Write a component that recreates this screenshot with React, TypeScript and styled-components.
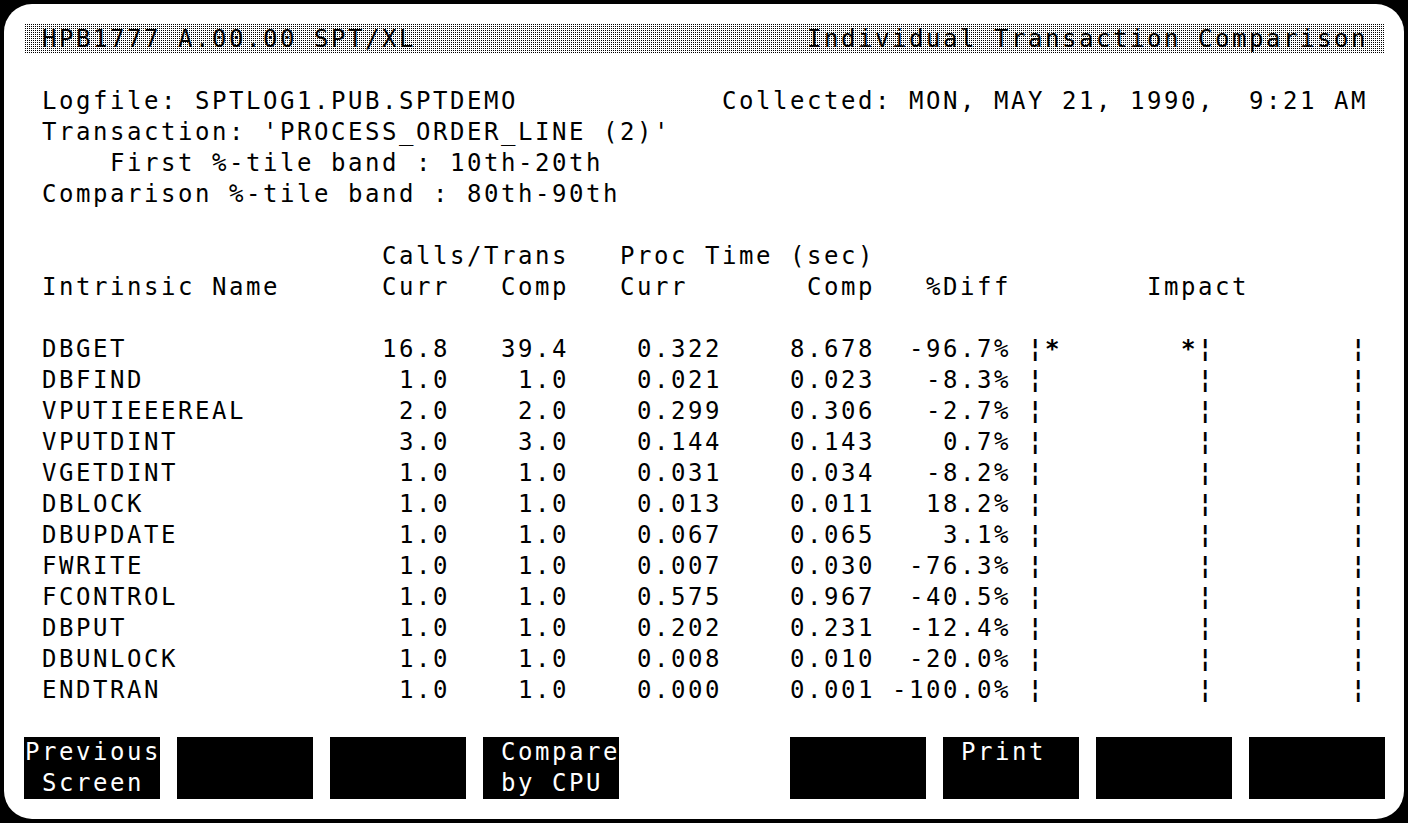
import React from "react";
import styled, { createGlobalStyle } from "styled-components";

const CELL = 17;
const LINE = 31;
const c = (n: number) => `${n * CELL}px`;

const GlobalStyle = createGlobalStyle`
  html, body { margin: 0; padding: 0; background: #000; }
  body { width: 1408px; height: 823px; overflow: hidden; }
`;

const Frame = styled.div`
  box-sizing: border-box;
  margin: 4px;
  width: 1400px;
  height: 815px;
  background: #fff;
  border-radius: 28px;
  padding: 20px 19px 20px 21px;
  font-family: "DejaVu Sans Mono", "Liberation Mono", monospace;
  font-size: 24px;
  line-height: ${LINE}px;
  letter-spacing: calc(${CELL}px - 1ch);
  color: #000;
  white-space: pre;
`;

const TitleBar = styled.div`
  height: 30px;
  margin-left: -1px;
  margin-bottom: 1px;
  padding: 0 ${CELL}px 0 ${CELL + 1}px;
  display: flex;
  justify-content: space-between;
  background-image: repeating-conic-gradient(#000 0 25%, #fff 0 100%);
  background-size: 2px 2px;
  line-height: 30px;
`;

const Blank = styled.div<{ $rows: number }>`
  height: ${(p) => p.$rows * LINE}px;
`;

const InfoLine = styled.div`
  height: ${LINE}px;
  padding: 0 ${CELL}px;
  display: flex;
  justify-content: space-between;
`;

const Table = styled.div`
  display: grid;
  padding-left: ${CELL}px;
  grid-template-columns: ${c(20)} ${c(4)} ${c(7)} ${c(9)} ${c(9)} ${c(8)} ${c(1)} ${c(20)};
  grid-auto-rows: ${LINE}px;
`;

const Cell = styled.div<{ $right?: boolean; $indent?: number; $span?: number }>`
  grid-column: span ${(p) => p.$span ?? 1};
  text-align: ${(p) => (p.$right ? "right" : "left")};
  padding-left: ${(p) => (p.$indent ?? 0) * CELL}px;
  overflow: visible;
`;

const FullRow = styled.div`
  grid-column: 1 / -1;
`;

const Impact = styled(Cell)`
  font-weight: bold;
`;

const SoftkeyBar = styled.div`
  display: flex;
  justify-content: space-between;
  margin-left: -1px;
`;

const KeyGroup = styled.div`
  display: flex;
  gap: ${CELL}px;
`;

const Key = styled.div`
  width: ${c(8)};
  height: ${LINE * 2}px;
  background: #000;
  color: #fff;
  padding-left: 1px;
  box-sizing: border-box;
`;

type Row = [string, string, string, string, string, string];

const rows: Row[] = [
  ["DBGET", "16.8", "39.4", "0.322", "8.678", "-96.7%"],
  ["DBFIND", "1.0", "1.0", "0.021", "0.023", "-8.3%"],
  ["VPUTIEEEREAL", "2.0", "2.0", "0.299", "0.306", "-2.7%"],
  ["VPUTDINT", "3.0", "3.0", "0.144", "0.143", "0.7%"],
  ["VGETDINT", "1.0", "1.0", "0.031", "0.034", "-8.2%"],
  ["DBLOCK", "1.0", "1.0", "0.013", "0.011", "18.2%"],
  ["DBUPDATE", "1.0", "1.0", "0.067", "0.065", "3.1%"],
  ["FWRITE", "1.0", "1.0", "0.007", "0.030", "-76.3%"],
  ["FCONTROL", "1.0", "1.0", "0.575", "0.967", "-40.5%"],
  ["DBPUT", "1.0", "1.0", "0.202", "0.231", "-12.4%"],
  ["DBUNLOCK", "1.0", "1.0", "0.008", "0.010", "-20.0%"],
  ["ENDTRAN", "1.0", "1.0", "0.000", "0.001", "-100.0%"],
];

const impactFor = (i: number) =>
  i === 0 ? "¦*       *¦        ¦" : "¦         ¦        ¦";

const keysLeft = ["Previous\n Screen", "", "", " Compare\n by CPU"];
const keysRight = ["", " Print", "", ""];

export default function App() {
  return (
    <>
      <GlobalStyle />
      <Frame>
        <TitleBar>
          <span>HPB1777 A.00.00 SPT/XL</span>
          <span>Individual Transaction Comparison</span>
        </TitleBar>
        <Blank $rows={1} />
        <InfoLine>
          <span>Logfile: SPTLOG1.PUB.SPTDEMO</span>
          <span>Collected: MON, MAY 21, 1990,  9:21 AM</span>
        </InfoLine>
        <InfoLine>
          <span>Transaction: 'PROCESS_ORDER_LINE (2)'</span>
        </InfoLine>
        <InfoLine>
          <span>    First %-tile band : 10th-20th</span>
        </InfoLine>
        <InfoLine>
          <span>Comparison %-tile band : 80th-90th</span>
        </InfoLine>
        <Blank $rows={1} />
        <Table>
          <Cell />
          <Cell $span={2}>Calls/Trans</Cell>
          <Cell $span={2} $right>Proc Time (sec)</Cell>
          <Cell $span={3} />

          <Cell>Intrinsic Name</Cell>
          <Cell>Curr</Cell>
          <Cell $right>Comp</Cell>
          <Cell $indent={3}>Curr</Cell>
          <Cell $right>Comp</Cell>
          <Cell $right>%Diff</Cell>
          <Cell />
          <Cell $indent={7}>Impact</Cell>

          <FullRow />

          {rows.map((r, i) => (
            <React.Fragment key={r[0]}>
              <Cell>{r[0]}</Cell>
              <Cell $right>{r[1]}</Cell>
              <Cell $right>{r[2]}</Cell>
              <Cell $right>{r[3]}</Cell>
              <Cell $right>{r[4]}</Cell>
              <Cell $right>{r[5]}</Cell>
              <Cell />
              <Impact>{impactFor(i)}</Impact>
            </React.Fragment>
          ))}
        </Table>
        <Blank $rows={1} />
        <SoftkeyBar>
          <KeyGroup>
            {keysLeft.map((k, i) => (
              <Key key={i}>{k}</Key>
            ))}
          </KeyGroup>
          <KeyGroup>
            {keysRight.map((k, i) => (
              <Key key={i}>{k}</Key>
            ))}
          </KeyGroup>
        </SoftkeyBar>
      </Frame>
    </>
  );
}
